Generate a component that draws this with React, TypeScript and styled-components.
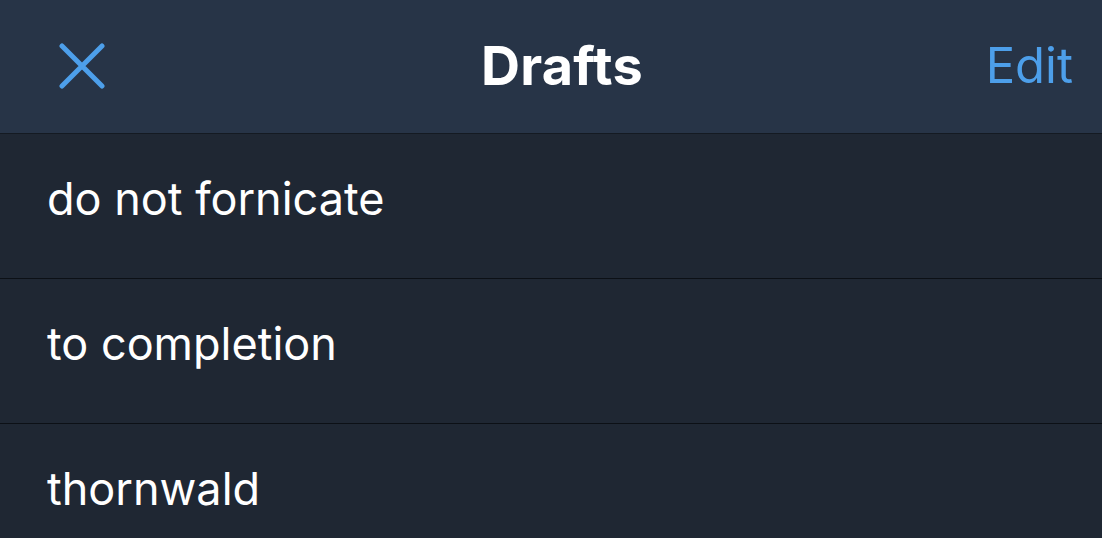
import React from "react";
import styled, { createGlobalStyle } from "styled-components";

const drafts = [
  { id: "d1", text: "do not fornicate" },
  { id: "d2", text: "to completion" },
  { id: "d3", text: "thornwald" },
];

const GlobalStyle = createGlobalStyle`
  html, body {
    margin: 0;
    padding: 0;
    background-color: #1f2733;
    overflow: hidden;
  }
  body {
    font-family: Inter, "Noto Sans", sans-serif;
    -webkit-font-smoothing: antialiased;
  }
`;

const App = () => {
  return (
    <Page>
      <GlobalStyle />
      <NavBar>
        <CloseButton aria-label="close">
          <svg width="46" height="46" viewBox="0 0 46 46">
            <path
              d="M3 3 L43 43 M43 3 L3 43"
              stroke="#4d9fea"
              strokeWidth="5"
              strokeLinecap="round"
              fill="none"
            />
          </svg>
        </CloseButton>
        <Title>Drafts</Title>
        <EditButton>Edit</EditButton>
      </NavBar>
      <DraftList>
        {drafts.map((item) => (
          <DraftRow key={item.id}>{item.text}</DraftRow>
        ))}
      </DraftList>
    </Page>
  );
};

const Page = styled.div`
  width: 1102px;
  height: 538px;
  overflow: hidden;
  display: flex;
  flex-direction: column;
  background-color: #1f2733;
`;

const NavBar = styled.div`
  height: 133px;
  flex-shrink: 0;
  display: grid;
  grid-template-columns: 1fr auto 1fr;
  align-items: center;
  padding: 0 29px 0 59px;
  background-color: #273447;
  border-bottom: 1px solid #141a22;
`;

const CloseButton = styled.div`
  justify-self: start;
  display: flex;
  align-items: center;
  margin-top: -1px;
`;

const Title = styled.div`
  color: #ffffff;
  font-size: 54px;
  font-weight: 700;
  letter-spacing: 0.2px;
  margin-left: -8px;
  margin-top: -2px;
`;

const EditButton = styled.div`
  justify-self: end;
  color: #4d9fea;
  font-size: 49px;
  font-weight: 400;
  margin-top: -2px;
`;

const DraftList = styled.div`
  display: flex;
  flex-direction: column;
`;

const DraftRow = styled.div`
  height: 145px;
  flex-shrink: 0;
  display: flex;
  align-items: center;
  padding: 0 0 16px 47px;
  box-sizing: border-box;
  color: #ffffff;
  font-size: 45px;
  font-weight: 400;
  letter-spacing: 0;
  border-bottom: 1px solid #0c1016;
`;

export default App;
